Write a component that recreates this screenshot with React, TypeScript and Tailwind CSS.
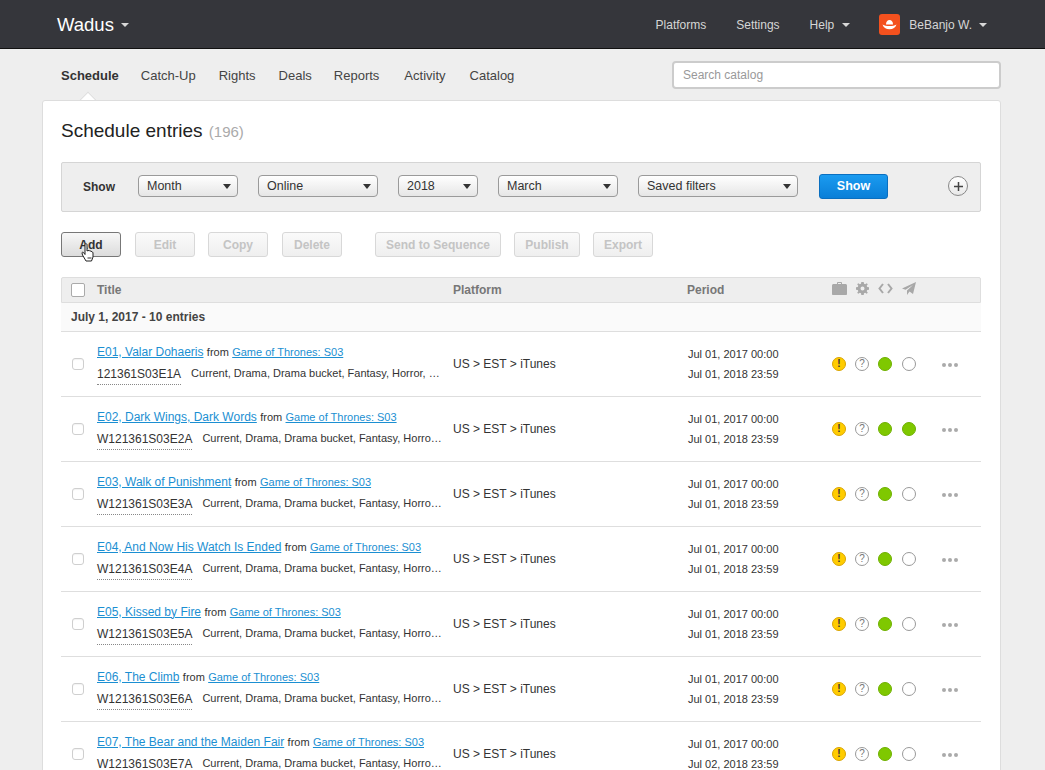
import React from 'react';

const longTags = 'Current, Drama, Drama bucket, Fantasy, Horro…';

const entries = [
    { title: 'E01, Valar Dohaeris', code: '121361S03E1A', tags: 'Current, Drama, Drama bucket, Fantasy, Horror, …', end: 'Jul 01, 2018 23:59', last: false },
    { title: 'E02, Dark Wings, Dark Words', code: 'W121361S03E2A', tags: longTags, end: 'Jul 01, 2018 23:59', last: true },
    { title: 'E03, Walk of Punishment', code: 'W121361S03E3A', tags: longTags, end: 'Jul 01, 2018 23:59', last: false },
    { title: 'E04, And Now His Watch Is Ended', code: 'W121361S03E4A', tags: longTags, end: 'Jul 01, 2018 23:59', last: false },
    { title: 'E05, Kissed by Fire', code: 'W121361S03E5A', tags: longTags, end: 'Jul 01, 2018 23:59', last: false },
    { title: 'E06, The Climb', code: 'W121361S03E6A', tags: longTags, end: 'Jul 01, 2018 23:59', last: false },
    { title: 'E07, The Bear and the Maiden Fair', code: 'W121361S03E7A', tags: longTags, end: 'Jul 02, 2018 23:59', last: false },
];

const navItems = [
    { label: 'Catch-Up', margin: 'ml-[22px]' },
    { label: 'Rights', margin: 'ml-[23px]' },
    { label: 'Deals', margin: 'ml-[23px]' },
    { label: 'Reports', margin: 'ml-[22px]' },
    { label: 'Activity', margin: 'ml-[25px]' },
    { label: 'Catalog', margin: 'ml-[24px]' },
];

const Caret = () => <span className="block w-0 h-0 border-x-[4.5px] border-x-transparent border-t-[4px] border-t-[#d8d8d8]" />;

const Select = ({ label, width }: { label: string; width: string }) => (
    <div className={`${width} h-[22px] flex items-center justify-between pl-[8px] pr-[6px] rounded-[4px] border border-[#9a9a9a] bg-gradient-to-b from-white to-[#e6e6e6] text-[12.5px] text-[#333]`}>
        <span>{label}</span>
        <span className="w-0 h-0 border-x-[4px] border-x-transparent border-t-[5px] border-t-[#333]" />
    </div>
);

const ActionButton = ({ label, width, active }: { label: string; width: string; active?: boolean }) => (
    <div
        className={`${width} h-[25px] flex items-center justify-center rounded-[3px] border text-[12px] font-bold ${
            active
                ? 'border-[#777] bg-gradient-to-b from-[#f7f7f7] to-[#dcdcdc] text-[#333]'
                : 'border-[#d8d8d8] bg-gradient-to-b from-[#fafafa] to-[#efefef] text-[#c4c4c4]'
        }`}
    >
        {label}
    </div>
);

const Status = () => (
    <span className="w-[14px] h-[14px] shrink-0 rounded-full bg-[#ffcc00] border border-[#d9a400] flex items-center justify-center text-[10px] font-bold leading-none text-[#333]">!</span>
);

const Question = () => (
    <span className="w-[14px] h-[14px] shrink-0 rounded-full bg-white border border-[#999] flex items-center justify-center text-[10px] leading-none text-[#777]">?</span>
);

const Row = ({ entry }: { entry: (typeof entries)[number] }) => (
    <div className="h-[65px] flex items-center border-b border-[#dedede] text-[#333]">
        <div className="w-[36px] flex pl-[11px]">
            <span className="block w-[12px] h-[12px] -mt-[1px] rounded-[3px] border border-[#cfcfcf] bg-white shadow-[inset_0_1px_1px_rgba(0,0,0,0.05)]" />
        </div>
        <div className="w-[356px] pr-[10px] min-w-0 -mt-[2px]">
            <div className="h-[21px] text-[12px] leading-[21px] whitespace-nowrap">
                <a className="text-[#1b8fd2] underline">{entry.title}</a> <span className="text-[11px]">from</span>{' '}
                <a className="text-[11px] text-[#1b8fd2] underline">Game of Thrones: S03</a>
            </div>
            <div className="mt-[1px] flex items-start leading-[20px] whitespace-nowrap">
                <span className="text-[12px] border-b border-dotted border-[#888] h-[21px] shrink-0">{entry.code}</span>
                <span className="ml-[10px] -mt-[1px] text-[11px]">{entry.tags}</span>
            </div>
        </div>
        <div className="w-[235px] text-[12px]">US &gt; EST &gt; iTunes</div>
        <div className="w-[144px] text-[11px] leading-[20px]">
            <div>Jul 01, 2017 00:00</div>
            <div>{entry.end}</div>
        </div>
        <div className="w-[128px] flex items-center -mt-[1px]">
            <Status />
            <span className="ml-[9px]"><Question /></span>
            <span className="block ml-[9px] w-[14px] h-[14px] rounded-full bg-[#7fc800] border border-[#6fb000]" />
            <span className={`block ml-[10px] w-[14px] h-[14px] rounded-full border ${entry.last ? 'bg-[#7fc800] border-[#6fb000]' : 'bg-white border-[#999]'}`} />
            <span className="ml-[26px] mt-[3px] flex gap-[2px]">
                <i className="block w-[4px] h-[4px] rounded-full bg-[#aaa]" />
                <i className="block w-[4px] h-[4px] rounded-full bg-[#aaa]" />
                <i className="block w-[4px] h-[4px] rounded-full bg-[#aaa]" />
            </span>
        </div>
    </div>
);

const App: React.FC = () => {
    return (
        <div className="h-[770px] overflow-hidden bg-[#eeeeee] font-['Liberation_Sans',Arial,sans-serif] antialiased">
            {/* Top bar */}
            <header className="h-[49px] bg-[#35363b] border-b border-[#111] flex items-center pl-[57px] pr-[58px]">
                <div className="flex items-center text-white text-[18.5px] pt-[1px]">
                    Wadus
                    <span className="ml-[7px]"><Caret /></span>
                </div>
                <nav className="ml-auto flex items-center text-[12px] text-[#d6d6d6] pt-[1px]">
                    <span>Platforms</span>
                    <span className="ml-[30px]">Settings</span>
                    <span className="ml-[30px]">Help</span>
                    <span className="ml-[8px]"><Caret /></span>
                    <span className="ml-[29px] w-[21px] h-[21px] rounded-[3px] bg-[#f4511e] flex items-center justify-center">
                        <svg width="15" height="13" viewBox="0 0 15 13" fill="white">
                            <path d="M4 6.500C4 3.500 5.500 2 7.500 2S11 3.500 11 6.500Z" />
                            <path d="M0.500 6.500C2.500 7.500 4.500 8 7.500 8s5-.5 7-1.500c-.8 3-3.500 4.700-7 4.700S1.300 9.500.5 6.500Z" />
                        </svg>
                    </span>
                    <span className="ml-[9px]">BeBanjo W.</span>
                    <span className="ml-[7px]"><Caret /></span>
                </nav>
            </header>

            {/* Section nav */}
            <div className="h-[51px] flex items-center pl-[61px] pr-[44px] text-[13px] text-[#444]">
                <div className="relative font-bold text-[#333] pt-[2px]">
                    Schedule
                    <span className="absolute left-[21px] top-[30px] w-[12px] h-[12px] rotate-45 bg-white border-l border-t border-[#dddddd]" />
                </div>
                {navItems.map((item) => (
                    <span key={item.label} className={`${item.margin} pt-[2px]`}>{item.label}</span>
                ))}
                <div className="ml-auto w-[329px] h-[28px] flex items-center pl-[9px] rounded-[4px] border-2 border-[#cccccc] bg-white text-[12px] text-[#999]">
                    Search catalog
                </div>
            </div>

            {/* Card */}
            <main className="relative mx-[42px] w-[959px] h-[700px] rounded-t-[3px] border border-[#dddddd] bg-white pl-[18px] pr-[19px]">
                <h1 className="pt-[17px] h-[61px] text-[19px] leading-[26px] text-[#222]">
                    Schedule entries <span className="ml-[1px] text-[15px] text-[#aaa]">(196)</span>
                </h1>

                <div className="h-[50px] flex items-center pl-[21px] rounded-[2px] border border-[#d5d5d5] bg-[#eeeeee]">
                    <b className="w-[55px] text-[12px] text-[#333]">Show</b>
                    <div className="flex items-center mb-[2px]">
                        <Select label="Month" width="w-[100px]" />
                        <span className="ml-[20px]"><Select label="Online" width="w-[120px]" /></span>
                        <span className="ml-[20px]"><Select label="2018" width="w-[80px]" /></span>
                        <span className="ml-[20px]"><Select label="March" width="w-[120px]" /></span>
                        <span className="ml-[20px]"><Select label="Saved filters" width="w-[160px]" /></span>
                        <span className="ml-[21px] w-[69px] h-[25px] flex items-center justify-center rounded-[3px] border border-[#0a6fc0] bg-gradient-to-b from-[#1a9bf0] to-[#0a7fd8] text-white text-[12.5px] font-bold">Show</span>
                        <span className="ml-[60px] w-[20px] h-[20px] rounded-full border border-[#888] bg-gradient-to-b from-white to-[#e8e8e8] flex items-center justify-center">
                            <svg width="9" height="9" viewBox="0 0 9 9"><path d="M4.500 0v9M0 4.500h9" stroke="#444" strokeWidth="1.500" /></svg>
                        </span>
                    </div>
                </div>

                <div className="relative mt-[20px] h-[25px] flex items-center">
                    <ActionButton label="Add" width="w-[60px]" active />
                    <span className="ml-[14px]"><ActionButton label="Edit" width="w-[60px]" /></span>
                    <span className="ml-[13px]"><ActionButton label="Copy" width="w-[60px]" /></span>
                    <span className="ml-[14px]"><ActionButton label="Delete" width="w-[60px]" /></span>
                    <span className="ml-[33px]"><ActionButton label="Send to Sequence" width="w-[126px]" /></span>
                    <span className="ml-[13px]"><ActionButton label="Publish" width="w-[66px]" /></span>
                    <span className="ml-[13px]"><ActionButton label="Export" width="w-[60px]" /></span>
                    {/* mouse pointer */}
                    <svg className="absolute left-[20px] top-[11px]" width="14" height="20" viewBox="0 0 14 20">
                        <path d="M4 1.500c0-1 2-1 2 0V8l1-.5 1.500.2 1.500.5 1.500.8c.6.500.5 1 .5 2v3l-1.500 4H5L1.500 12 1 10c0-1 1-1 1.500-.5L4 11.500Z" fill="white" stroke="#222" strokeWidth="1" />
                        <path d="M6.500 14h4v2h-4z" fill="#999" />
                    </svg>
                </div>

                {/* Table */}
                <div className="mt-[20px]">
                    <div className="h-[26px] flex items-center rounded-t-[2px] border border-[#dedede] bg-[#eeeeee] text-[12px] font-bold text-[#777]">
                        <div className="w-[35px] flex pl-[9px]">
                            <span className="block w-[14px] h-[14px] rounded-[2px] border border-[#aaa] bg-white" />
                        </div>
                        <div className="w-[356px]">Title</div>
                        <div className="w-[234px]">Platform</div>
                        <div className="w-[145px]">Period</div>
                        <div className="flex items-center gap-[9px] -mt-[3px]">
                            <svg width="15" height="13" viewBox="0 0 15 13" fill="#a8a8a8"><path d="M5 2V1c0-.5.5-1 1-1h3c.5 0 1 .5 1 1v1h3.500c.8 0 1.500.7 1.500 1.500V12c0 .6-.5 1-1 1H1c-.5 0-1-.4-1-1V3.500C0 2.700.7 2 1.500 2ZM6 2h3V1H6Z" /></svg>
                            <svg width="13" height="13" viewBox="0 0 13 13" fill="#a8a8a8"><path fillRule="evenodd" d="M5.300 0h2.400l.3 1.800 1.200.5L10.700 1.200l1.100 1.100-1.100 1.500.5 1.200L13 5.300v2.400l-1.800.3-.5 1.200 1.100 1.500-1.100 1.100-1.500-1.100-1.200.5-.3 1.800H5.300L5 11.200l-1.200-.5-1.500 1.100-1.100-1.100 1.100-1.500L1.800 8 0 7.700V5.300L1.800 5l.5-1.200L1.200 2.300l1.100-1.100 1.500 1.100L5 1.800ZM6.500 4.500a2 2 0 1 0 0 4 2 2 0 0 0 0-4Z" /></svg>
                            <svg width="15" height="11" viewBox="0 0 15 11" fill="none" stroke="#a8a8a8" strokeWidth="2"><path d="M5 1 1.500 5.500 5 10M10 1l3.500 4.500L10 10" /></svg>
                            <svg width="14" height="13" viewBox="0 0 14 13" fill="#a8a8a8"><path d="M14 0 11 12 7.500 9.500 5 13V8.500L11 3 3.500 7.800 0 6.500Z" /></svg>
                        </div>
                    </div>
                    <div className="h-[29px] flex items-center pl-[10px] bg-[#fafafa] border-b border-[#dedede] text-[12px] font-bold text-[#444]">
                        July 1, 2017 - 10 entries
                    </div>
                    {entries.map((entry) => (
                        <Row key={entry.code} entry={entry} />
                    ))}
                </div>
            </main>
        </div>
    );
};

export default App;
